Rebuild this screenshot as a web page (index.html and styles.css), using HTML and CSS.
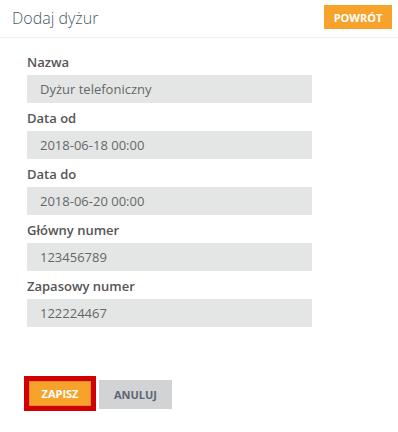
FILE: index.html
```html
<!DOCTYPE html>
<html lang="pl">

<head>
  <meta charset="UTF-8">
  <meta name="viewport" content="width=device-width, initial-scale=1.0">
  <title>Dodaj dyżur</title>
  <link rel="stylesheet" href="styles.css">
</head>

<body>
  <div class="header">
    <div class="title">Dodaj dyżur</div>
    <button class="btn btn-back">POWRÓT</button>
  </div>
  <form class="form">
    <div class="field">
      <label>Nazwa</label>
      <div class="input">Dyżur telefoniczny</div>
    </div>
    <div class="field">
      <label>Data od</label>
      <div class="input">2018-06-18 00:00</div>
    </div>
    <div class="field">
      <label>Data do</label>
      <div class="input">2018-06-20 00:00</div>
    </div>
    <div class="field">
      <label>Główny numer</label>
      <div class="input">123456789</div>
    </div>
    <div class="field">
      <label>Zapasowy numer</label>
      <div class="input">122224467</div>
    </div>
    <div class="actions">
      <button type="button" class="btn btn-save">ZAPISZ</button>
      <button type="button" class="btn btn-cancel">ANULUJ</button>
    </div>
  </form>
</body>

</html>
```

FILE: styles.css
```css
body {
  margin: 0;
  font-family: "Open Sans", Arial, sans-serif;
  background: #fff;
}

/* nagłówek */
.header {
  display: flex;
  justify-content: space-between;
  align-items: flex-start;
  height: 38px;
  padding: 5px 6px 0 12px;
  box-sizing: border-box;
  border-bottom: 1px solid #f1f1f1;
}

.title {
  font-size: 16px;
  font-weight: 300;
  line-height: 22px;
  color: #4a5866;
  margin-top: 2px;
}

.btn {
  border: none;
  font-family: "Open Sans", Arial, sans-serif;
  font-size: 11px;
  font-weight: 700;
  padding: 0;
  cursor: pointer;
}

.btn-back {
  width: 68px;
  height: 24px;
  background: #f7a22b;
  color: #fff;
}

/* formularz */
.form {
  padding: 16px 0 0 27px;
}

.field {
  margin-bottom: 7px;
}

.field label {
  display: block;
  font-size: 13px;
  font-weight: 600;
  line-height: 17px;
  color: #555;
  margin-bottom: 4px;
}

.input {
  width: 285px;
  height: 28px;
  line-height: 28px;
  padding-left: 13px;
  box-sizing: border-box;
  background: #e4e6e6;
  font-size: 13px;
  color: #666;
}

.actions {
  display: flex;
  align-items: center;
  gap: 3px;
  margin-top: 49px;
  margin-left: -3px;
}

.btn-save {
  width: 72px;
  height: 35px;
  background: #f7a22b;
  color: #fff;
  border: 5px solid #d00000;
  box-shadow: inset 0 0 0 1px #e58c1c;
}

.btn-cancel {
  width: 73px;
  height: 29px;
  background: #d2d3d4;
  color: #5b6673;
  margin-top: 2px;
}
```
